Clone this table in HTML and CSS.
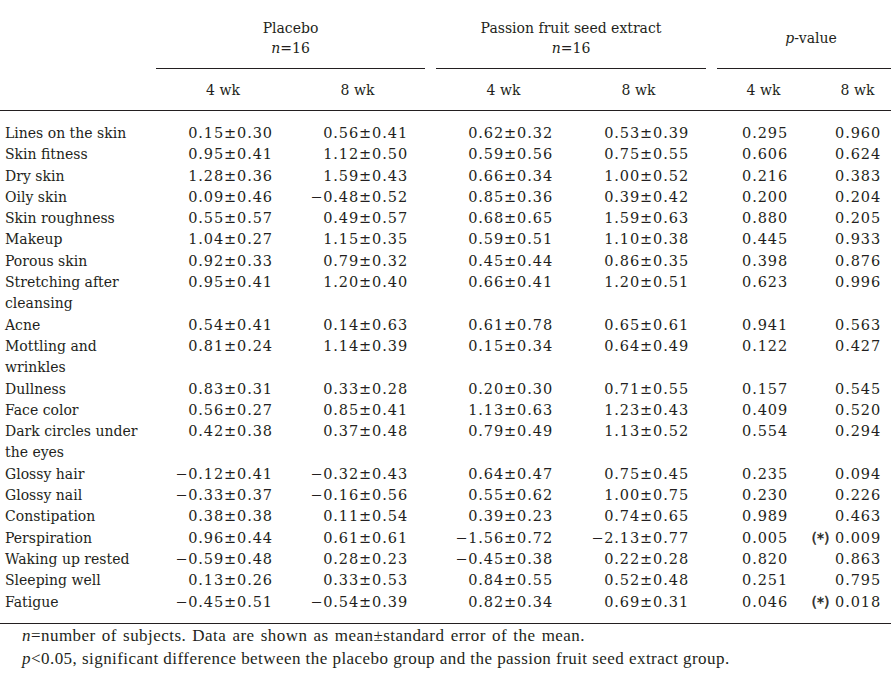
FILE: index.html
```html
<!DOCTYPE html>
<html>
<head>
<meta charset="utf-8">
<link rel="stylesheet" href="styles.css">
</head>
<body>
<table class="tbl">
  <colgroup>
    <col class="c-label"><col class="c-a"><col class="c-b"><col class="c-gap">
    <col class="c-b"><col class="c-b"><col class="c-gap"><col class="c-p1"><col class="c-p2">
  </colgroup>
  <thead>
    <tr class="grp">
      <th></th>
      <th colspan="2" class="ruled">Placebo<br><i>n</i>=16</th>
      <th></th>
      <th colspan="2" class="ruled">Passion fruit seed extract<br><i>n</i>=16</th>
      <th></th>
      <th colspan="2" class="ruled pv"><i>p</i>-value</th>
    </tr>
    <tr class="sub">
      <th></th>
      <th>4 wk</th><th>8 wk</th><th></th>
      <th>4 wk</th><th>8 wk</th><th></th>
      <th>4 wk</th><th class="last">8 wk</th>
    </tr>
  </thead>
  <tbody>
    <tr class="first"><td>Lines on the skin</td><td>0.15±0.30</td><td>0.56±0.41</td><td></td><td>0.62±0.32</td><td>0.53±0.39</td><td></td><td>0.295</td><td>0.960</td></tr>
    <tr><td>Skin fitness</td><td>0.95±0.41</td><td>1.12±0.50</td><td></td><td>0.59±0.56</td><td>0.75±0.55</td><td></td><td>0.606</td><td>0.624</td></tr>
    <tr><td>Dry skin</td><td>1.28±0.36</td><td>1.59±0.43</td><td></td><td>0.66±0.34</td><td>1.00±0.52</td><td></td><td>0.216</td><td>0.383</td></tr>
    <tr><td>Oily skin</td><td>0.09±0.46</td><td>−0.48±0.52</td><td></td><td>0.85±0.36</td><td>0.39±0.42</td><td></td><td>0.200</td><td>0.204</td></tr>
    <tr><td>Skin roughness</td><td>0.55±0.57</td><td>0.49±0.57</td><td></td><td>0.68±0.65</td><td>1.59±0.63</td><td></td><td>0.880</td><td>0.205</td></tr>
    <tr><td>Makeup</td><td>1.04±0.27</td><td>1.15±0.35</td><td></td><td>0.59±0.51</td><td>1.10±0.38</td><td></td><td>0.445</td><td>0.933</td></tr>
    <tr><td>Porous skin</td><td>0.92±0.33</td><td>0.79±0.32</td><td></td><td>0.45±0.44</td><td>0.86±0.35</td><td></td><td>0.398</td><td>0.876</td></tr>
    <tr><td>Stretching after cleansing</td><td>0.95±0.41</td><td>1.20±0.40</td><td></td><td>0.66±0.41</td><td>1.20±0.51</td><td></td><td>0.623</td><td>0.996</td></tr>
    <tr><td>Acne</td><td>0.54±0.41</td><td>0.14±0.63</td><td></td><td>0.61±0.78</td><td>0.65±0.61</td><td></td><td>0.941</td><td>0.563</td></tr>
    <tr><td>Mottling and wrinkles</td><td>0.81±0.24</td><td>1.14±0.39</td><td></td><td>0.15±0.34</td><td>0.64±0.49</td><td></td><td>0.122</td><td>0.427</td></tr>
    <tr><td>Dullness</td><td>0.83±0.31</td><td>0.33±0.28</td><td></td><td>0.20±0.30</td><td>0.71±0.55</td><td></td><td>0.157</td><td>0.545</td></tr>
    <tr><td>Face color</td><td>0.56±0.27</td><td>0.85±0.41</td><td></td><td>1.13±0.63</td><td>1.23±0.43</td><td></td><td>0.409</td><td>0.520</td></tr>
    <tr><td>Dark circles under the eyes</td><td>0.42±0.38</td><td>0.37±0.48</td><td></td><td>0.79±0.49</td><td>1.13±0.52</td><td></td><td>0.554</td><td>0.294</td></tr>
    <tr><td>Glossy hair</td><td>−0.12±0.41</td><td>−0.32±0.43</td><td></td><td>0.64±0.47</td><td>0.75±0.45</td><td></td><td>0.235</td><td>0.094</td></tr>
    <tr><td>Glossy nail</td><td>−0.33±0.37</td><td>−0.16±0.56</td><td></td><td>0.55±0.62</td><td>1.00±0.75</td><td></td><td>0.230</td><td>0.226</td></tr>
    <tr><td>Constipation</td><td>0.38±0.38</td><td>0.11±0.54</td><td></td><td>0.39±0.23</td><td>0.74±0.65</td><td></td><td>0.989</td><td>0.463</td></tr>
    <tr><td>Perspiration</td><td>0.96±0.44</td><td>0.61±0.61</td><td></td><td>−1.56±0.72</td><td>−2.13±0.77</td><td></td><td>0.005</td><td><span class="sig">(*)</span> 0.009</td></tr>
    <tr><td>Waking up rested</td><td>−0.59±0.48</td><td>0.28±0.23</td><td></td><td>−0.45±0.38</td><td>0.22±0.28</td><td></td><td>0.820</td><td>0.863</td></tr>
    <tr><td>Sleeping well</td><td>0.13±0.26</td><td>0.33±0.53</td><td></td><td>0.84±0.55</td><td>0.52±0.48</td><td></td><td>0.251</td><td>0.795</td></tr>
    <tr class="final"><td>Fatigue</td><td>−0.45±0.51</td><td>−0.54±0.39</td><td></td><td>0.82±0.34</td><td>0.69±0.31</td><td></td><td>0.046</td><td><span class="sig">(*)</span> 0.018</td></tr>
  </tbody>
</table>
<div class="notes">
  <p class="n1"><i>n</i>=number of subjects. Data are shown as mean±standard error of the mean.</p>
  <p><i>p</i>&lt;0.05, significant difference between the placebo group and the passion fruit seed extract group.</p>
</div>
</body>
</html>
```
FILE: styles.css
```css
html, body {
  margin: 0;
  padding: 0;
  background: #ffffff;
}
body {
  color: #231f20;
  font-family: "DejaVu Serif", "Liberation Serif", serif;
  font-size: 14px;
}
.tbl {
  width: 891px;
  border-collapse: collapse;
  table-layout: fixed;
}
.c-label { width: 156px; }
.c-a { width: 134px; }
.c-b { width: 135px; }
.c-gap { width: 11px; }
.c-p1 { width: 93px; }
.c-p2 { width: 81px; }
th {
  font-weight: normal;
  padding: 0;
}
.grp th {
  line-height: 20px;
  padding: 18px 0 10px;
  text-align: center;
  vertical-align: middle;
}
.grp th.ruled {
  border-bottom: 1px solid #231f20;
}
.grp th.pv {
  padding-left: 14px;
}
.sub th {
  height: 41px;
  line-height: 20px;
  text-align: center;
  vertical-align: middle;
  border-bottom: 1px solid #231f20;
}
.sub th.last {
  padding-left: 14px;
}
td {
  padding: 0 17px 0 0;
  line-height: 21.3px;
  font-size: 14.5px;
  letter-spacing: 0.9px;
  text-align: right;
  vertical-align: top;
  white-space: nowrap;
}
td:first-child {
  text-align: left;
  padding: 0 4px 0 5px;
  font-size: 14px;
  letter-spacing: 0;
  white-space: normal;
}
td:nth-child(5) { padding-right: 18px; }
td:nth-child(8) { padding-right: 22px; }
td:nth-child(9) { padding-right: 10px; }
tr.first td { padding-top: 12px; }
tr.final td {
  padding-bottom: 10px;
  border-bottom: 1px solid #231f20;
}
.sig {
  font-family: "DejaVu Sans", sans-serif;
  font-weight: normal;
  font-size: 14px;
  letter-spacing: 0;
  -webkit-text-stroke: 0.4px #231f20;
}
.notes {
  padding: 0 0 0 22px;
  font-family: "Liberation Serif", serif;
  font-size: 17px;
  letter-spacing: 0.45px;
}
.notes p {
  margin: 0;
  line-height: 23px;
}
.notes .n1 {
  word-spacing: 1.5px;
}
```
